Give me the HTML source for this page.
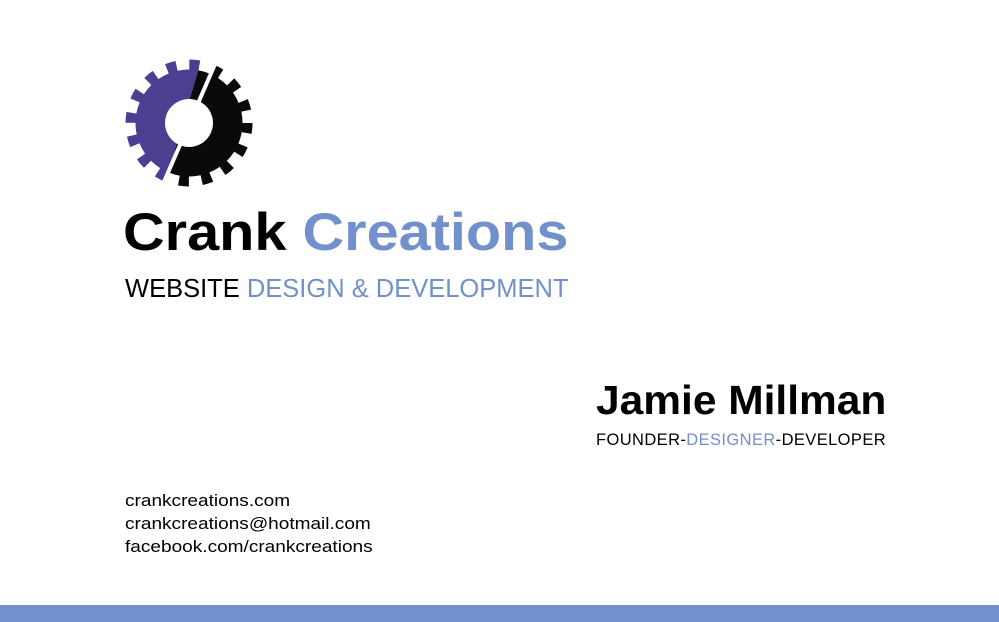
<!DOCTYPE html>
<html><head><meta charset="utf-8"><style>
html,body{margin:0;padding:0;background:#fff;width:999px;height:622px;overflow:hidden;position:relative;font-family:"Liberation Sans",sans-serif}
.a{position:absolute;white-space:nowrap;line-height:1;transform-origin:0 0}
.b{color:#7291cc}
</style></head><body>
<svg class="a" style="left:0;top:0" width="999" height="622">
<defs>
<clipPath id="L"><polygon points="0,0 219,0 160,200 0,200"/></clipPath>
<clipPath id="R"><polygon points="219,0 400,0 400,200 160,200"/></clipPath>
<g id="g">
<circle cx="189" cy="123" r="58" fill="none" stroke-width="11" stroke-dasharray="10 12.78"/>
<circle cx="189" cy="123" r="53"/>
</g>
</defs>
<g clip-path="url(#L)" fill="#4a3f91" stroke="#4a3f91"><use href="#g"/></g>
<g clip-path="url(#R)" fill="#0a0a0a" stroke="#0a0a0a"><use href="#g"/></g>
<circle cx="189" cy="123" r="24" fill="#fff"/>
<line x1="222" y1="48" x2="157" y2="198" stroke="#fff" stroke-width="4"/>
</svg>
<div class="a" style="left:123px;top:206px;font-size:53px;font-weight:bold;transform:scaleX(1.088)"><span>Crank</span> <span class="b">Creations</span></div>
<div class="a" style="left:125px;top:277px;font-size:25.5px">WEBSITE <span class="b">DESIGN &amp; DEVELOPMENT</span></div>
<div class="a" style="left:596px;top:380px;font-size:41px;font-weight:bold;transform:scaleX(1.036)">Jamie Millman</div>
<div class="a" style="left:596px;top:432px;font-size:16.5px;letter-spacing:0.4px">FOUNDER-<span class="b">DESIGNER</span>-DEVELOPER</div>
<div class="a" style="left:125px;top:489px;font-size:17px;line-height:23px;transform:scaleX(1.12)">crankcreations.com<br>crankcreations@hotmail.com<br>facebook.com/crankcreations</div>
<div class="a" style="left:0;top:605px;width:999px;height:17px;background:#7291cc"></div>
</body></html>
